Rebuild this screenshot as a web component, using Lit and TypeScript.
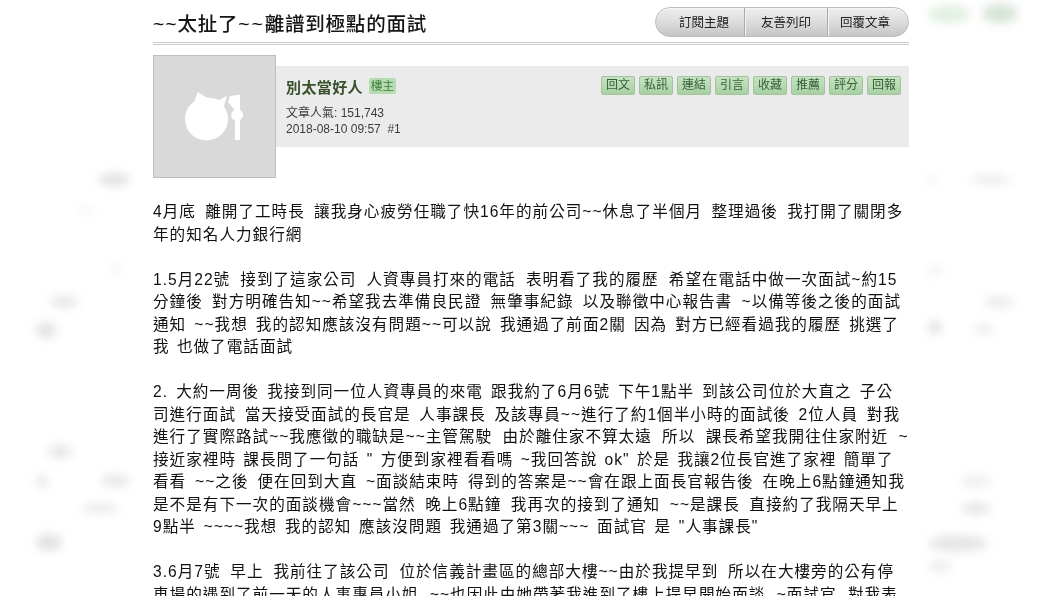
import { LitElement, html, css } from "lit";
import { customElement } from "lit/decorators.js";

const ACTIONS = ["回文", "私訊", "連結", "引言", "收藏", "推薦", "評分", "回報"];
const TOP = ["訂閱主題", "友善列印", "回覆文章"];
// Each line: [text, width of its spaces in px]
const PARAS: [string, number][][] = [
  [
    ["4月底 離開了工時長 讓我身心疲勞任職了快16年的前公司~~休息了半個月 整理過後 我打開了關閉多", 4],
    ["年的知名人力銀行網", 4],
  ],
  [
    ["1.5月22號 接到了這家公司 人資專員打來的電話 表明看了我的履歷 希望在電話中做一次面試~約15", 4.75],
    ["分鐘後 對方明確告知~~希望我去準備良民證 無肇事紀錄 以及聯徵中心報告書 ~以備等後之後的面試", 4],
    ["通知 ~~我想 我的認知應該沒有問題~~可以說 我通過了前面2關 因為 對方已經看過我的履歷 挑選了", 2.8],
    ["我 也做了電話面試", 2],
  ],
  [
    ["2. 大約一周後 我接到同一位人資專員的來電 跟我約了6月6號 下午1點半 到該公司位於大直之 子公", 2.8],
    ["司進行面試 當天接受面試的長官是 人事課長 及該專員~~進行了約1個半小時的面試後 2位人員 對我", 3.4],
    ["進行了實際路試~~我應徵的職缺是~~主管駕駛 由於離住家不算太遠 所以 課長希望我開往住家附近 ~", 5],
    ["接近家裡時 課長問了一句話 \" 方便到家裡看看嗎 ~我回答說 ok\" 於是 我讓2位長官進了家裡 簡單了", 2],
    ["看看 ~~之後 便在回到大直 ~面談結束時 得到的答案是~~會在跟上面長官報告後 在晚上6點鐘通知我", 3.6],
    ["是不是有下一次的面談機會~~~當然 晚上6點鐘 我再次的接到了通知 ~~是課長 直接約了我隔天早上", 4.25],
    ["9點半 ~~~~我想 我的認知 應該沒問題 我通過了第3關~~~ 面試官 是 \"人事課長\"", 2.4],
  ],
  [
    ["3.6月7號 早上 我前往了該公司 位於信義計畫區的總部大樓~~由於我提早到 所以在大樓旁的公有停", 4.5],
    ["車場的遇到了前一天的人事專員小姐 ~~也因此由她帶著我進到了樓上提早開始面談 ~面試官 對我表", 6],
  ],
];

// Faint ghost smudges in the margins: [x, y, w, h, colour]
const BLOBS: [number, number, number, number, string][] = [
  [928, 5, 42, 18, "#e2f0e2"],
  [982, 4, 36, 19, "#d6e4d6"],
  [98, 173, 32, 13, "#e2e2e2"],
  [79, 207, 16, 6, "#f2f2f2"],
  [111, 265, 10, 8, "#f0f0f0"],
  [50, 296, 28, 12, "#e6e6e6"],
  [36, 322, 20, 16, "#e2e2e2"],
  [48, 445, 24, 13, "#e6e6e6"],
  [36, 475, 12, 13, "#e8e8e8"],
  [101, 474, 29, 13, "#e8e8e8"],
  [82, 504, 36, 9, "#e8e8e8"],
  [36, 534, 26, 17, "#e2e2e2"],
  [928, 175, 7, 10, "#f0f0f0"],
  [971, 175, 40, 9, "#ececec"],
  [928, 266, 14, 9, "#f0f0f0"],
  [984, 296, 30, 12, "#ececec"],
  [928, 320, 14, 15, "#e4e4e4"],
  [974, 324, 20, 10, "#ececec"],
  [961, 475, 30, 12, "#eeeeee"],
  [961, 502, 30, 13, "#e8e8e8"],
  [928, 535, 60, 17, "#e6e6e6"],
  [928, 560, 24, 12, "#eeeeee"],
];

@customElement("app-root")
export class AppRoot extends LitElement {
  static styles = css`
    :host {
      display: block;
      width: 1060px;
      height: 596px;
      overflow: hidden;
      background: #fff;
      position: relative;
      font-family: "Liberation Sans", "Noto Sans CJK TC", sans-serif;
      color: #222;
    }
    .blob {
      position: absolute;
      border-radius: 50%;
      filter: blur(5px);
    }
    .wrap {
      width: 756px;
      margin-left: 153px;
      position: relative;
      filter: blur(0.3px);
    }
    .head {
      display: flex;
      justify-content: space-between;
      align-items: flex-start;
      box-sizing: border-box;
      border-bottom: 3px double #c8c8c8;
      height: 45px;
      padding-top: 7px;
    }
    .title {
      font-size: 19.5px;
      line-height: 34px;
      letter-spacing: 0.8px;
      color: #151515;
      font-weight: 500;
    }
    .wide {
      letter-spacing: 1.8px;
    }
    .tabs {
      display: flex;
      height: 30px;
      box-sizing: border-box;
      border: 1px solid #bcbcbc;
      border-radius: 15px;
      overflow: hidden;
      background: linear-gradient(#eeeeee, #e0e0e0 40%, #c6c6c6);
      box-shadow: inset 0 1px 0 #f6f6f6;
    }
    .tab {
      display: flex;
      align-items: center;
      justify-content: center;
      font-size: 12.5px;
      color: #222;
      width: 83px;
      box-sizing: border-box;
      padding-bottom: 2px;
      border-left: 1px solid #aaa;
      box-shadow: inset 1px 0 0 #f4f4f4;
    }
    .tab:first-child {
      width: 88px;
      padding-left: 8px;
      border-left: 0;
      box-shadow: none;
    }
    .tab:last-child {
      width: 81px;
      padding-right: 6px;
    }
    .post {
      display: flex;
      margin-top: 10px;
      height: 123px;
    }
    .avatar {
      width: 123px;
      height: 123px;
      box-sizing: border-box;
      background: #d9d9d9;
      border: 1px solid #bdbdbd;
      flex: none;
      display: flex;
      align-items: center;
      justify-content: center;
    }
    .avatar svg {
      display: block;
      width: 123px;
      height: 123px;
      flex: none;
    }
    .info {
      flex: 1;
      height: 81px;
      margin-top: 11px;
      background: #ebebeb;
      display: flex;
      justify-content: space-between;
      padding: 0 8px 0 10px;
    }
    .name-row {
      display: flex;
      align-items: center;
      gap: 6px;
      margin-top: 8px;
      height: 24px;
    }
    .name {
      font-size: 15px;
      font-weight: 700;
      color: #38502c;
      letter-spacing: 0.4px;
    }
    .badge {
      font-size: 11.5px;
      color: #3e7a3e;
      background: #b5dcb0;
      border-radius: 2px;
      padding: 0 2px;
      line-height: 16px;
      height: 16px;
    }
    .meta {
      font-size: 12px;
      line-height: 15.5px;
      color: #3c3c3c;
      margin-top: 8px;
    }
    .actions {
      display: flex;
      gap: 4px;
      margin-top: 10px;
    }
    .act {
      width: 34px;
      height: 19px;
      box-sizing: border-box;
      font-size: 12px;
      line-height: 17px;
      text-align: center;
      color: #35603a;
      background: linear-gradient(#c6e3c0, #a8d0a4);
      border: 1px solid #a4c4a0;
      border-radius: 2px;
    }
    .body {
      margin-top: 23px;
      font-size: 15.6px;
      line-height: 22.5px;
      letter-spacing: 1px;
      color: #111;
    }
    .body p {
      margin: 0 0 22.5px;
    }
    .line {
      white-space: nowrap;
    }
  `;

  render() {
    return html`
      ${BLOBS.map(
        ([x, y, w, h, c]) =>
          html`<div class="blob" style="left:${x}px;top:${y}px;width:${w}px;height:${h}px;background:${c}"></div>`
      )}
      <div class="wrap">
        <div class="head">
          <div class="title">~~太扯了<span class="wide">~~</span>離譜到極點的面試</div>
          <div class="tabs">${TOP.map((t) => html`<div class="tab">${t}</div>`)}</div>
        </div>
        <div class="post">
          <div class="avatar">
            <svg viewBox="0 0 123 123" fill="#fff">
              <circle cx="53.5" cy="64" r="21.5" />
              <path d="M44.7 37 L55 43.5 Q61 42.5 66 45 L74 41 L70 54 L40 50 Z" />
              <path d="M77 41 L87 39.5 L87 55 A5.7 5.7 0 0 1 87 65 L87 85 L82 85 L82 65.5 A5.7 5.7 0 0 1 81.5 55 L75 47 Z" />
            </svg>
          </div>
          <div class="info">
            <div>
              <div class="name-row">
                <span class="name">別太當好人</span><span class="badge">樓主</span>
              </div>
              <div class="meta">
                <div>文章人氣: 151,743</div>
                <div>2018-08-10 09:57&nbsp; #1</div>
              </div>
            </div>
            <div class="actions">${ACTIONS.map((a) => html`<div class="act">${a}</div>`)}</div>
          </div>
        </div>
        <div class="body">
          ${PARAS.map(
            (p) => html`<p>${p.map(([t, ws]) => html`<div class="line" style="word-spacing:${ws}px">${t}</div>`)}</p>`
          )}
        </div>
      </div>
    `;
  }
}
